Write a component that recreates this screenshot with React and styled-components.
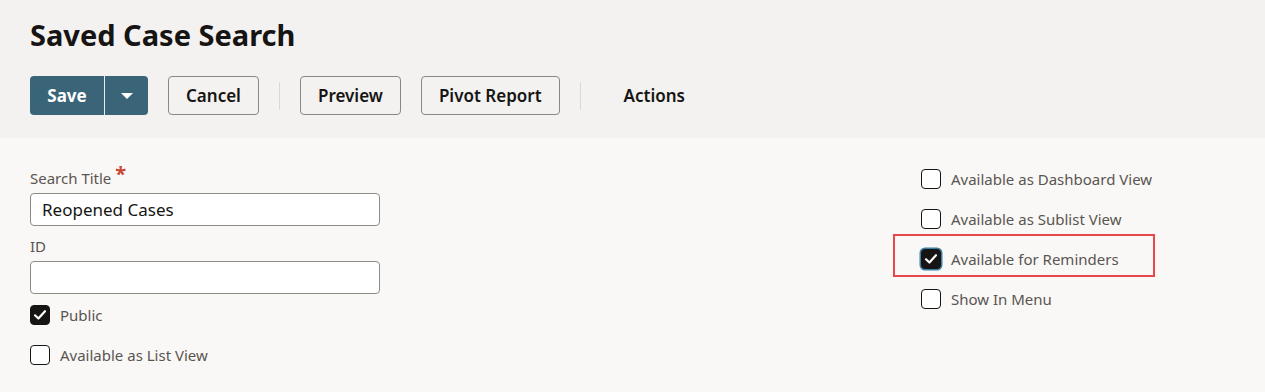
import styled, { createGlobalStyle } from "styled-components";

const GlobalStyle = createGlobalStyle`
  html, body {
    margin: 0;
    padding: 0;
    background: #f9f8f6;
    font-family: "Noto Sans", "Open Sans", sans-serif;
    color: #161513;
  }
`;

const Page = styled.div`
  width: 1265px;
  height: 392px;
  overflow: hidden;
  background: #f9f8f6;
`;

const Header = styled.div`
  background: #f3f2f0;
  padding: 15px 30px 23px;
`;

const Title = styled.h1`
  margin: 0 0 21px;
  font-size: 29px;
  line-height: 40px;
  font-weight: 700;
  color: #161513;
`;

const Toolbar = styled.div`
  display: flex;
  align-items: center;
  gap: 20px;
`;

const SplitButton = styled.div`
  display: flex;
  height: 39px;
  border-radius: 4px;
  overflow: hidden;
  background: #3a6579;
`;

const SplitMain = styled.button`
  width: 75px;
  border: none;
  background: transparent;
  color: #ffffff;
  font-family: inherit;
  font-size: 17px;
  font-weight: 700;
  padding: 0;
  border-right: 1px solid #e6ecef;
`;

const SplitArrow = styled.button`
  width: 43px;
  border: none;
  background: transparent;
  display: flex;
  align-items: center;
  justify-content: center;
  padding: 0;
  &::after {
    content: "";
    border-left: 6px solid transparent;
    border-right: 6px solid transparent;
    border-top: 6px solid #ffffff;
  }
`;

const Button = styled.button`
  height: 39px;
  padding: 0 ${(p) => p.$pad || 17}px;
  border: ${(p) => (p.$plain ? "1px solid transparent" : "1px solid #8b8782")};
  border-radius: 4px;
  background: transparent;
  color: #161513;
  font-family: inherit;
  font-size: 17px;
  font-weight: 600;
`;

const Divider = styled.div`
  width: 1px;
  height: 28px;
  background: #dcd9d5;
`;

const Body = styled.div`
  display: grid;
  grid-template-columns: 891px 1fr;
  padding: 29px 30px 0;
`;

const LeftColumn = styled.div`
  width: 350px;
  display: flex;
  flex-direction: column;
`;

const FieldLabel = styled.label`
  display: block;
  font-size: 15px;
  line-height: 20px;
  color: #5a5551;
  margin-bottom: 5px;
`;

const Required = styled.span`
  color: #c74634;
  font-size: 20px;
  font-weight: 700;
  margin-left: 4px;
  position: relative;
  top: -3px;
`;

const Input = styled.input`
  box-sizing: border-box;
  width: 350px;
  height: 33px;
  border: 1px solid #8f8b86;
  border-radius: 4px;
  background: #ffffff;
  padding: 0 11px;
  font-family: inherit;
  font-size: 17px;
  color: #161513;
  margin-bottom: ${(p) => p.$mb || 0}px;
  outline: none;
`;

const CheckList = styled.div`
  display: flex;
  flex-direction: column;
  gap: ${(p) => p.$gap}px;
  margin-top: ${(p) => p.$mt || 0}px;
`;

const CheckRow = styled.div`
  position: relative;
  display: flex;
  align-items: center;
  gap: 10px;
  height: 20px;
`;

const Box = styled.span`
  box-sizing: border-box;
  width: 20px;
  height: 20px;
  border-radius: 4px;
  border: 1.5px solid #161513;
  background: ${(p) => (p.$checked ? "#161513" : "#ffffff")};
  display: flex;
  align-items: center;
  justify-content: center;
  flex-shrink: 0;
  box-shadow: ${(p) => (p.$focus ? "0 0 0 1.5px #3f7fa3" : "none")};
`;

const CheckText = styled.span`
  font-size: 15px;
  line-height: 20px;
  color: #5a5551;
  white-space: nowrap;
`;

const Highlight = styled.div`
  position: absolute;
  left: -28px;
  top: -15px;
  width: 262px;
  height: 43px;
  box-sizing: border-box;
  border: 2px solid #e8474c;
  pointer-events: none;
`;

const Tick = () => (
  <svg width="16" height="16" viewBox="0 0 16 16">
    <path d="M3 8.3 L6.4 11.5 L13 4.2" fill="none" stroke="#ffffff" strokeWidth="2.2" strokeLinecap="round" strokeLinejoin="round" />
  </svg>
);

const Checkbox = ({ label, checked, focus, highlight }) => (
  <CheckRow>
    <Box $checked={checked} $focus={focus}>{checked && <Tick />}</Box>
    <CheckText>{label}</CheckText>
    {highlight && <Highlight />}
  </CheckRow>
);

const App = () => {
  return (
    <Page>
      <GlobalStyle />
      <Header>
        <Title>Saved Case Search</Title>
        <Toolbar>
          <SplitButton>
            <SplitMain>Save</SplitMain>
            <SplitArrow aria-label="More save options" />
          </SplitButton>
          <Button>Cancel</Button>
          <Divider />
          <Button>Preview</Button>
          <Button>Pivot Report</Button>
          <Divider />
          <Button $plain $pad={22}>Actions</Button>
        </Toolbar>
      </Header>
      <Body>
        <LeftColumn>
          <FieldLabel>
            Search Title<Required>*</Required>
          </FieldLabel>
          <Input defaultValue="Reopened Cases" $mb={10} />
          <FieldLabel>ID</FieldLabel>
          <Input defaultValue="" />
          <CheckList $gap={20} $mt={11}>
            <Checkbox label="Public" checked />
            <Checkbox label="Available as List View" />
          </CheckList>
        </LeftColumn>
        <CheckList $gap={20} $mt={2}>
          <Checkbox label="Available as Dashboard View" />
          <Checkbox label="Available as Sublist View" />
          <Checkbox label="Available for Reminders" checked focus highlight />
          <Checkbox label="Show In Menu" />
        </CheckList>
      </Body>
    </Page>
  );
};

export default App;
